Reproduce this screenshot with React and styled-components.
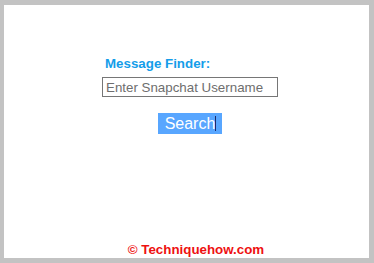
import React from "react";
import styled, { createGlobalStyle } from "styled-components";

const Global = createGlobalStyle`
  html, body { margin: 0; padding: 0; background: #c3c3c3; }
  body { font-family: "Liberation Sans", Arial, sans-serif; }
`;

const Frame = styled.div`
  box-sizing: border-box;
  width: 374px;
  height: 263px;
  padding: 5px 5px 5px 4px;
  background: #c3c3c3;
`;

const Panel = styled.div`
  height: 100%;
  background: #ffffff;
  display: flex;
  flex-direction: column;
  padding-top: 51px;
  box-sizing: border-box;
`;

const Form = styled.div`
  width: 176px;
  margin-left: 98px;
  display: flex;
  flex-direction: column;
`;

const Title = styled.div`
  font-size: 13.33px;
  line-height: 16px;
  font-weight: bold;
  color: #149de9;
  padding-left: 3px;
`;

const Input = styled.input`
  box-sizing: border-box;
  margin-top: 5px;
  width: 176px;
  height: 20px;
  border: 1px solid #767676;
  padding: 0 3px;
  font-family: "Liberation Sans", Arial, sans-serif;
  font-size: 13.33px;
  color: #333;
  outline: none;
  &::placeholder { color: #6e6e6e; opacity: 1; }
`;

const Button = styled.button`
  align-self: center;
  margin-top: 16px;
  height: 21px;
  padding: 0 6px 0 7px;
  border: none;
  background: #58a6ff;
  color: #ffffff;
  font-family: "Liberation Sans", Arial, sans-serif;
  font-size: 16px;
  line-height: 21px;
  display: flex;
  align-items: center;
`;

const Caret = styled.span`
  display: inline-block;
  width: 1px;
  height: 15px;
  background: #1a2a6a;
`;

const Footer = styled.div`
  margin-top: auto;
  padding-left: 19px;
  text-align: center;
  font-size: 13.33px;
  line-height: 16px;
  font-weight: bold;
  color: #ee1111;
`;

export default function App() {
  return (
    <>
      <Global />
      <Frame>
        <Panel>
          <Form>
            <Title>Message Finder:</Title>
            <Input type="text" placeholder="Enter Snapchat Username" />
            <Button type="button">
              Search<Caret />
            </Button>
          </Form>
          <Footer>© Techniquehow.com</Footer>
        </Panel>
      </Frame>
    </>
  );
}
